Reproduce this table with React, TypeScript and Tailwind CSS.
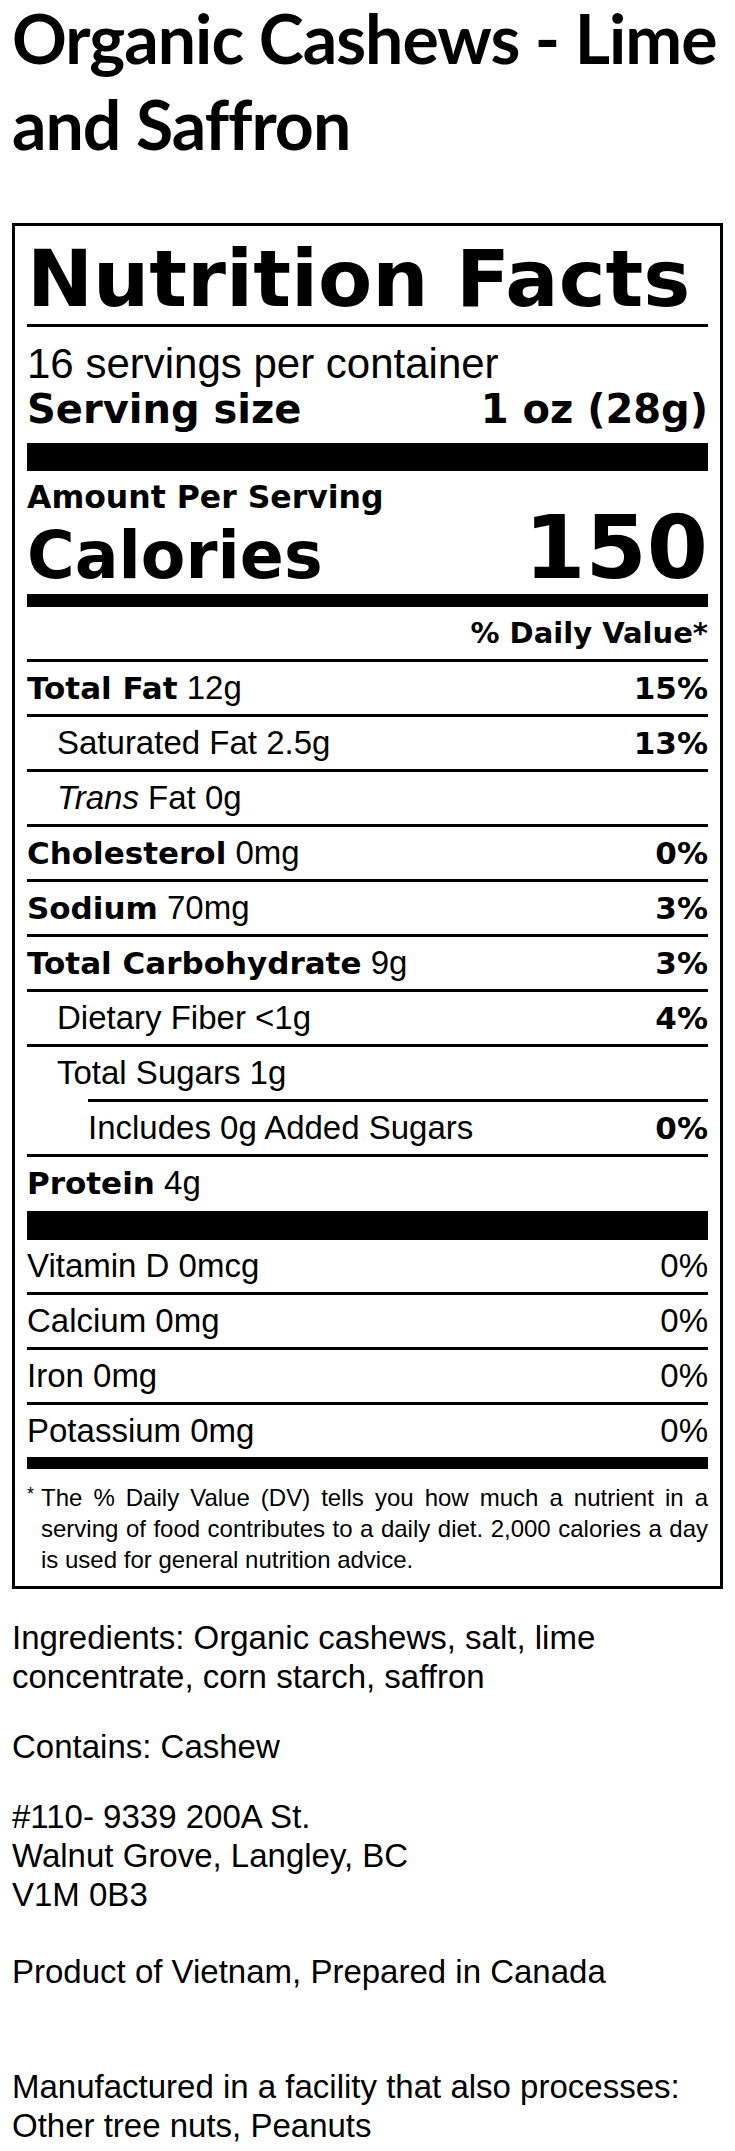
import React from "react";

const heavy = "font-['DejaVu_Sans',sans-serif] font-bold";
const plain = "font-['Liberation_Sans',Arial,sans-serif]";

type Row = {
  label: React.ReactNode;
  amount?: string;
  dv?: string;
  strong?: boolean;
  indent?: 0 | 1 | 2;
};

const rows: Row[] = [
  { label: "Total Fat", amount: "12g", dv: "15%", strong: true },
  { label: "Saturated Fat", amount: "2.5g", dv: "13%", indent: 1 },
  { label: <><i>Trans</i> Fat</>, amount: "0g", indent: 1 },
  { label: "Cholesterol", amount: "0mg", dv: "0%", strong: true },
  { label: "Sodium", amount: "70mg", dv: "3%", strong: true },
  { label: "Total Carbohydrate", amount: "9g", dv: "3%", strong: true },
  { label: "Dietary Fiber", amount: "<1g", dv: "4%", indent: 1 },
  { label: "Total Sugars", amount: "1g", indent: 1 },
  { label: "Includes 0g Added Sugars", dv: "0%", indent: 2 },
  { label: "Protein", amount: "4g", strong: true },
];

const vitamins = [
  ["Vitamin D 0mcg", "0%"],
  ["Calcium 0mg", "0%"],
  ["Iron 0mg", "0%"],
  ["Potassium 0mg", "0%"],
];

function NutrientRow({ row }: { row: Row }) {
  return (
    <div
      className={`flex h-[55px] items-baseline justify-between border-t-[3px] border-black leading-[52px] ${
        row.indent === 2 ? "ml-[61px]" : ""
      }`}
    >
      <div className={`${plain} text-[33px] ${row.indent === 1 ? "pl-[30px]" : ""}`}>
        {row.strong ? <span className={`${heavy} text-[31px]`}>{row.label}</span> : row.label}
        {row.amount ? <> {row.amount}</> : null}
      </div>
      {row.dv && <div className={`${heavy} text-[31px]`}>{row.dv}</div>}
    </div>
  );
}

function Label() {
  return (
    <div className="mx-3 mt-[56px] border-[3px] border-black px-3 pt-[13px] pb-[11px] text-black">
      <div className={`${heavy} border-b-[3px] border-black pb-[5px] text-[79px] leading-[80px]`}>
        Nutrition Facts
      </div>
      <div className={`${plain} mt-[14px] text-[42px] leading-[46px]`}>16 servings per container</div>
      <div className={`${heavy} flex justify-between text-[40px] leading-[44px]`}>
        <span>Serving size</span>
        <span>1 oz (28g)</span>
      </div>
      <div className="mt-[12px] h-[28px] bg-black" />

      <div className={`${heavy} mt-[11px] text-[31.5px] leading-[30px]`}>Amount Per Serving</div>
      <div className={`${heavy} flex items-baseline justify-between leading-[72px]`}>
        <span className="text-[65px]">Calories</span>
        <span className="text-[88px]">150</span>
      </div>
      <div className="mt-[2px] h-[13px] bg-black" />

      <div className={`${heavy} h-[52px] text-right text-[29px] leading-[52px]`}>% Daily Value*</div>

      {rows.map((row, i) => (
        <NutrientRow key={i} row={row} />
      ))}

      <div className="mt-[2px] h-[29px] bg-black" />

      {vitamins.map(([name, dv], i) => (
        <div
          key={name}
          className={`${plain} flex justify-between text-[33px] leading-[52px] ${
            i > 0 ? "border-t-[3px] border-black" : ""
          }`}
        >
          <span>{name}</span>
          <span>{dv}</span>
        </div>
      ))}

      <div className="h-[12px] bg-black" />

      <div className={`${plain} mt-[13px] flex text-[24px] leading-[31px]`}>
        <span className="w-[14px] shrink-0 text-[18px] leading-[24px]">*</span>
        <p className="text-justify">
          The % Daily Value (DV) tells you how much a nutrient in a serving of food contributes to a daily diet.
          2,000 calories a day is used for general nutrition advice.
        </p>
      </div>
    </div>
  );
}

export default function App() {
  return (
    <div className="min-h-[2151px] bg-white pb-[10px] text-black">
      <h1 className="-mt-[5px] px-3 font-['Lato',sans-serif] text-[68px] font-bold leading-[86px] tracking-[-1px]">
        Organic Cashews - Lime and Saffron
      </h1>

      <Label />

      <div className={`${plain} px-3 text-[33px] leading-[39px]`}>
        <p className="mt-[29px]">Ingredients: Organic cashews, salt, lime concentrate, corn starch, saffron</p>
        <p className="mt-[31px]">Contains: Cashew</p>
        <p className="mt-[31px]">
          #110- 9339 200A St.
          <br />
          Walnut Grove, Langley, BC
          <br />
          V1M 0B3
        </p>
        <p className="mt-[38px]">Product of Vietnam, Prepared in Canada</p>
        <p className="mt-[76px]">
          Manufactured in a facility that also processes:
          <br />
          Other tree nuts, Peanuts
        </p>
      </div>
    </div>
  );
}
